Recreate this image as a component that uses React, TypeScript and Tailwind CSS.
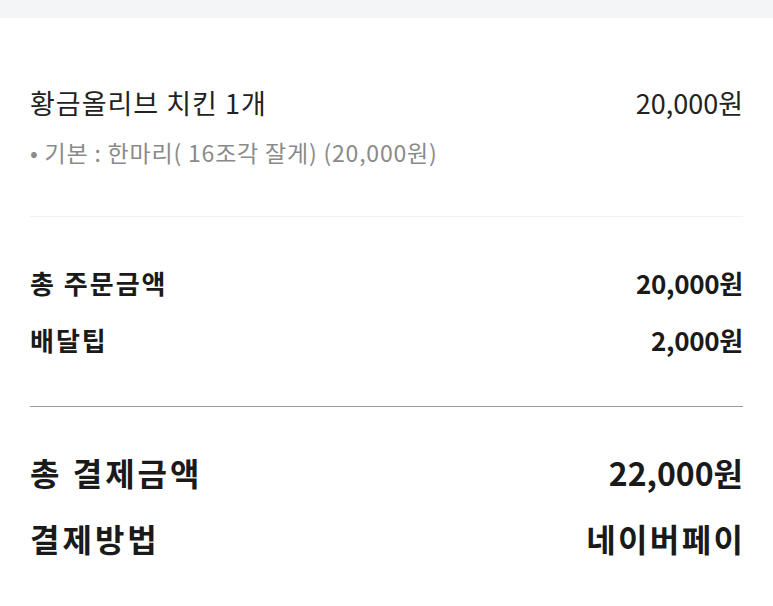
import React from "react";

const font = { fontFamily: '"Noto Sans CJK KR", "Noto Sans", sans-serif' };

function Row({
    label,
    value,
    className,
    labelClass,
    valueClass,
}: {
    label: string;
    value: string;
    className: string;
    labelClass?: string;
    valueClass?: string;
}) {
    return (
        <div className={"flex items-center justify-between " + className}>
            <span className={labelClass}>{label}</span>
            <span className={valueClass}>{value}</span>
        </div>
    );
}

export default function App() {
    return (
        <div className="w-[773px] h-[606px] bg-white overflow-hidden" style={font}>
            <div className="h-[18px] bg-[#f4f5f7]" />
            <div className="px-[30px] pt-[70px]">
                <Row
                    label="황금올리브 치킨 1개"
                    value="20,000원"
                    className="text-[27px] leading-[30px] text-[#222]"
                    labelClass="tracking-[1px]"
                />
                <div className="mt-[19px] text-[23px] leading-[30px] text-[#8a8a8a] tracking-[0.8px]">
                    • 기본 : 한마리( 16조각 잘게) (20,000원)
                </div>

                <div className="mt-[49px] h-px bg-[#f1f1f1]" />

                <Row
                    label="총 주문금액"
                    value="20,000원"
                    className="mt-[51px] text-[26px] leading-[30px] font-bold text-[#1a1a1a]"
                    labelClass="tracking-[2px]"
                    valueClass="tracking-[-0.3px]"
                />
                <Row
                    label="배달팁"
                    value="2,000원"
                    className="mt-[27px] text-[26px] leading-[30px] font-bold text-[#1a1a1a]"
                    labelClass="tracking-[2px]"
                    valueClass="tracking-[-0.3px]"
                />

                <div className="mt-[51px] h-px bg-[#9a9a9a]" />

                <Row
                    label="총 결제금액"
                    value="22,000원"
                    className="mt-[47px] text-[32px] leading-[36px] font-bold text-[#1a1a1a]"
                    labelClass="tracking-[3px]"
                />
                <Row
                    label="결제방법"
                    value="네이버페이"
                    className="mt-[30px] text-[32px] leading-[36px] font-bold text-[#1a1a1a]"
                    labelClass="tracking-[3px]"
                    valueClass="tracking-[2.4px] -mr-[2.4px]"
                />
            </div>
        </div>
    );
}
